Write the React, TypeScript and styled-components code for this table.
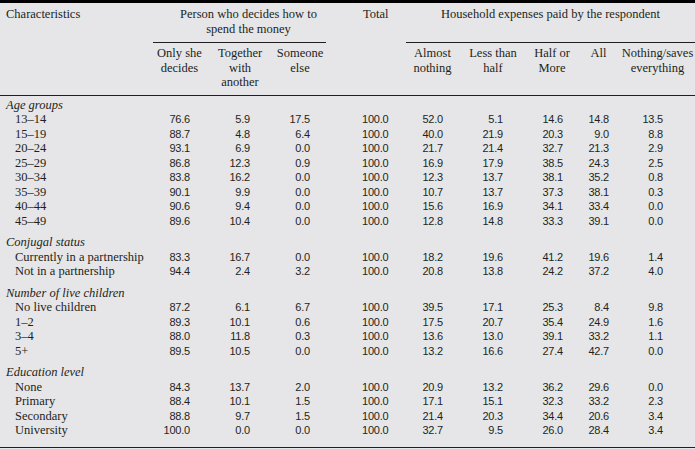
import React from 'react';
import styled, { createGlobalStyle } from 'styled-components';

const Global = createGlobalStyle`
  html, body { margin: 0; padding: 0; background: #e6e6e8; }
  body { width: 695px; height: 449px; overflow: hidden; }
`;

const COLS = '153px 53px 68px 52px 80px 53px 68px 50px 43px 75px';
const PADS = [16, 24, 16, 0, 16, 24, 14, 11, 32];

const Sheet = styled.div`
  width: 695px;
  height: 449px;
  box-sizing: border-box;
  background: #e6e6e8;
  border-top: 3px solid #000;
  color: #231f20;
  font-family: "Liberation Serif", "Times New Roman", serif;
  font-size: 12.5px;
  line-height: 14.5px;
`;

const Head = styled.div`
  display: grid;
  grid-template-columns: ${COLS};
  padding-top: 4px;
  border-bottom: 1px solid #231f20;
`;

const HeadCell = styled.div<{ $col: string; $row: number; $align?: string; $padLeft?: number }>`
  grid-column: ${(p) => p.$col};
  grid-row: ${(p) => p.$row};
  text-align: ${(p) => p.$align ?? 'center'};
  padding-left: ${(p) => p.$padLeft ?? 0}px;
`;

const GroupHead = styled.div<{ $col: string; $padLeft?: number }>`
  grid-column: ${(p) => p.$col};
  grid-row: 1;
  text-align: center;
  padding-left: ${(p) => p.$padLeft ?? 0}px;
  padding-bottom: 6px;
  border-bottom: 1px solid #231f20;
`;

const SubHead = styled.div<{ $col: number }>`
  grid-column: ${(p) => p.$col};
  grid-row: 2;
  text-align: center;
  padding-top: 3px;
  padding-bottom: 5px;
  white-space: nowrap;
`;

const Body = styled.div`
  padding-top: 2px;
  padding-bottom: 9px;
  border-bottom: 1px solid #231f20;
`;

const Section = styled.div`
  & + & {
    margin-top: 7px;
  }
`;

const SectionTitle = styled.div`
  font-style: italic;
  padding-left: 6px;
  height: 14.5px;
`;

const Row = styled.div`
  display: grid;
  grid-template-columns: ${COLS};
  height: 14.5px;
  align-items: center;
`;

const Label = styled.div`
  padding-left: 15px;
  white-space: nowrap;
`;

const Num = styled.div<{ $pad: number; $left?: boolean }>`
  font-family: "Liberation Sans", Arial, sans-serif;
  font-size: 11px;
  letter-spacing: -0.2px;
  text-align: ${(p) => (p.$left ? 'left' : 'right')};
  padding-right: ${(p) => (p.$left ? 0 : p.$pad)}px;
  padding-left: ${(p) => (p.$left ? 36 : 0)}px;
`;

type Sec = { title: string; rows: [string, string[]][] };

const s = (t: string) => t.split(' ');

const DATA: Sec[] = [
  {
    title: 'Age groups',
    rows: [
      ['13–14', s('76.6 5.9 17.5 100.0 52.0 5.1 14.6 14.8 13.5')],
      ['15–19', s('88.7 4.8 6.4 100.0 40.0 21.9 20.3 9.0 8.8')],
      ['20–24', s('93.1 6.9 0.0 100.0 21.7 21.4 32.7 21.3 2.9')],
      ['25–29', s('86.8 12.3 0.9 100.0 16.9 17.9 38.5 24.3 2.5')],
      ['30–34', s('83.8 16.2 0.0 100.0 12.3 13.7 38.1 35.2 0.8')],
      ['35–39', s('90.1 9.9 0.0 100.0 10.7 13.7 37.3 38.1 0.3')],
      ['40–44', s('90.6 9.4 0.0 100.0 15.6 16.9 34.1 33.4 0.0')],
      ['45–49', s('89.6 10.4 0.0 100.0 12.8 14.8 33.3 39.1 0.0')],
    ],
  },
  {
    title: 'Conjugal status',
    rows: [
      ['Currently in a partnership', s('83.3 16.7 0.0 100.0 18.2 19.6 41.2 19.6 1.4')],
      ['Not in a partnership', s('94.4 2.4 3.2 100.0 20.8 13.8 24.2 37.2 4.0')],
    ],
  },
  {
    title: 'Number of live children',
    rows: [
      ['No live children', s('87.2 6.1 6.7 100.0 39.5 17.1 25.3 8.4 9.8')],
      ['1–2', s('89.3 10.1 0.6 100.0 17.5 20.7 35.4 24.9 1.6')],
      ['3–4', s('88.0 11.8 0.3 100.0 13.6 13.0 39.1 33.2 1.1')],
      ['5+', s('89.5 10.5 0.0 100.0 13.2 16.6 27.4 42.7 0.0')],
    ],
  },
  {
    title: 'Education level',
    rows: [
      ['None', s('84.3 13.7 2.0 100.0 20.9 13.2 36.2 29.6 0.0')],
      ['Primary', s('88.4 10.1 1.5 100.0 17.1 15.1 32.3 33.2 2.3')],
      ['Secondary', s('88.8 9.7 1.5 100.0 21.4 20.3 34.4 20.6 3.4')],
      ['University', s('100.0 0.0 0.0 100.0 32.7 9.5 26.0 28.4 3.4')],
    ],
  },
];

export default function App() {
  return (
    <>
      <Global />
      <Sheet>
        <Head>
          <HeadCell $col="1" $row={1} $align="left" $padLeft={6}>
            Characteristics
          </HeadCell>
          <GroupHead $col="2 / 5" $padLeft={18}>
            Person who decides how to
            <br />
            spend the money
          </GroupHead>
          <HeadCell $col="5" $row={1} $align="left" $padLeft={37}>
            Total
          </HeadCell>
          <GroupHead $col="6 / 11">Household expenses paid by the respondent</GroupHead>
          <SubHead $col={2}>
            Only she
            <br />
            decides
          </SubHead>
          <SubHead $col={3}>
            Together
            <br />
            with
            <br />
            another
          </SubHead>
          <SubHead $col={4}>
            Someone
            <br />
            else
          </SubHead>
          <SubHead $col={6}>
            Almost
            <br />
            nothing
          </SubHead>
          <SubHead $col={7}>
            Less than
            <br />
            half
          </SubHead>
          <SubHead $col={8}>
            Half or
            <br />
            More
          </SubHead>
          <SubHead $col={9}>All</SubHead>
          <SubHead $col={10}>
            Nothing/saves
            <br />
            everything
          </SubHead>
        </Head>
        <Body>
          {DATA.map((sec) => (
            <Section key={sec.title}>
              <SectionTitle>{sec.title}</SectionTitle>
              {sec.rows.map(([label, vals]) => (
                <Row key={label}>
                  <Label>{label}</Label>
                  {vals.map((v, i) => (
                    <Num key={i} $pad={PADS[i]} $left={i === 3}>
                      {v}
                    </Num>
                  ))}
                </Row>
              ))}
            </Section>
          ))}
        </Body>
      </Sheet>
    </>
  );
}
